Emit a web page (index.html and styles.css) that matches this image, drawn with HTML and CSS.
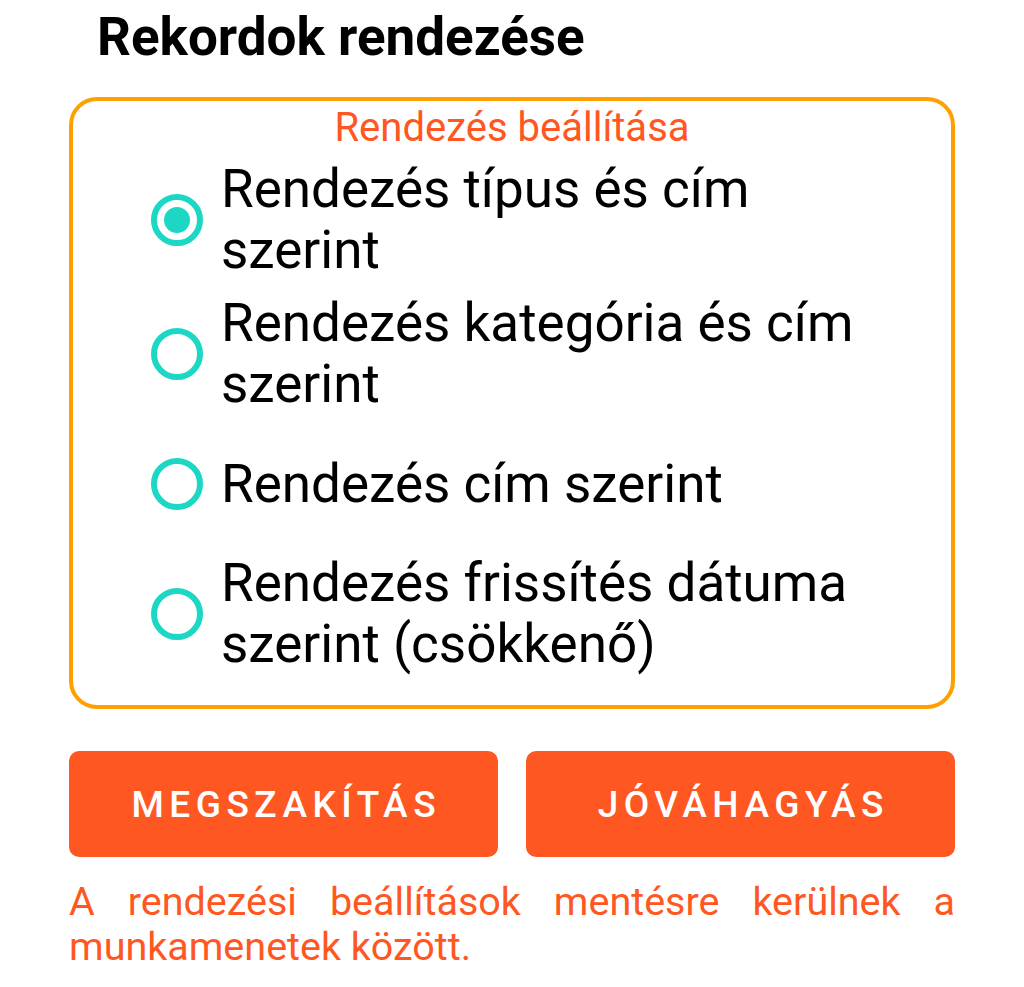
FILE: index.html
```html
<!DOCTYPE html>
<html lang="hu">

<head>
    <meta charset="UTF-8">
    <meta name="viewport" content="width=device-width, initial-scale=1.0">
    <title>Rekordok rendezése</title>

    <link rel="stylesheet" href="styles.css">
</head>

<body>
    <div class="dialog">
        <h1 class="title">Rekordok rendezése</h1>

        <div class="sortBox">
            <div class="sortLegend">Rendezés beállítása</div>
            <label class="option">
                <span class="radio checked"></span>
                <span class="optionText">Rendezés típus és cím szerint</span>
            </label>
            <label class="option">
                <span class="radio"></span>
                <span class="optionText">Rendezés kategória és cím szerint</span>
            </label>
            <label class="option">
                <span class="radio"></span>
                <span class="optionText">Rendezés cím szerint</span>
            </label>
            <label class="option">
                <span class="radio"></span>
                <span class="optionText">Rendezés frissítés dátuma szerint (csökkenő)</span>
            </label>
        </div>

        <div class="buttons">
            <button class="btn">Megszakítás</button>
            <button class="btn">Jóváhagyás</button>
        </div>

        <p class="note">A rendezési beállítások mentésre kerülnek a munkamenetek között.</p>
    </div>
</body>

</html>
```

FILE: styles.css
```css
body {
    font-family: 'Roboto', 'Liberation Sans', sans-serif;
    background-color: #fff;
    margin: 0;
    padding: 0;
    color: #000;
}

.dialog {
    padding: 0 69px;
}

.title {
    margin: 0;
    padding: 5px 0 0 28px;
    font-size: 53px;
    font-weight: 700;
    line-height: 64px;
}

.sortBox {
    margin-top: 28px;
    border: 4px solid #ffa000;
    border-radius: 28px;
    padding: 5px 0 24px 0;
}

.sortLegend {
    text-align: center;
    color: #ff5722;
    font-size: 40px;
    line-height: 44px;
    padding-bottom: 3px;
}

.option {
    display: flex;
    align-items: center;
    box-sizing: border-box;
    min-height: 126px;
    padding: 6px 48px 6px 78px;
}

.radio {
    flex: none;
    width: 40px;
    height: 40px;
    border: 6px solid #1bd7c3;
    border-radius: 50%;
    margin-right: 18px;
    position: relative;
}

.radio.checked::after {
    content: "";
    position: absolute;
    left: 7px;
    top: 7px;
    width: 26px;
    height: 26px;
    border-radius: 50%;
    background-color: #1bd7c3;
}

.optionText {
    font-size: 53px;
    line-height: 61px;
}

.buttons {
    display: flex;
    gap: 28px;
    margin-top: 42px;
}

.btn {
    flex: 1;
    height: 106px;
    border: none;
    border-radius: 10px;
    background-color: #ff5722;
    color: #fff;
    font-family: 'Roboto', sans-serif;
    font-size: 37px;
    font-weight: 500;
    letter-spacing: 5.5px;
    text-indent: 5.5px;
    text-transform: uppercase;
}

.note {
    margin: 22px 0 0 0;
    color: #ff5722;
    font-size: 39.5px;
    line-height: 45px;
    text-align: justify;
}
```
